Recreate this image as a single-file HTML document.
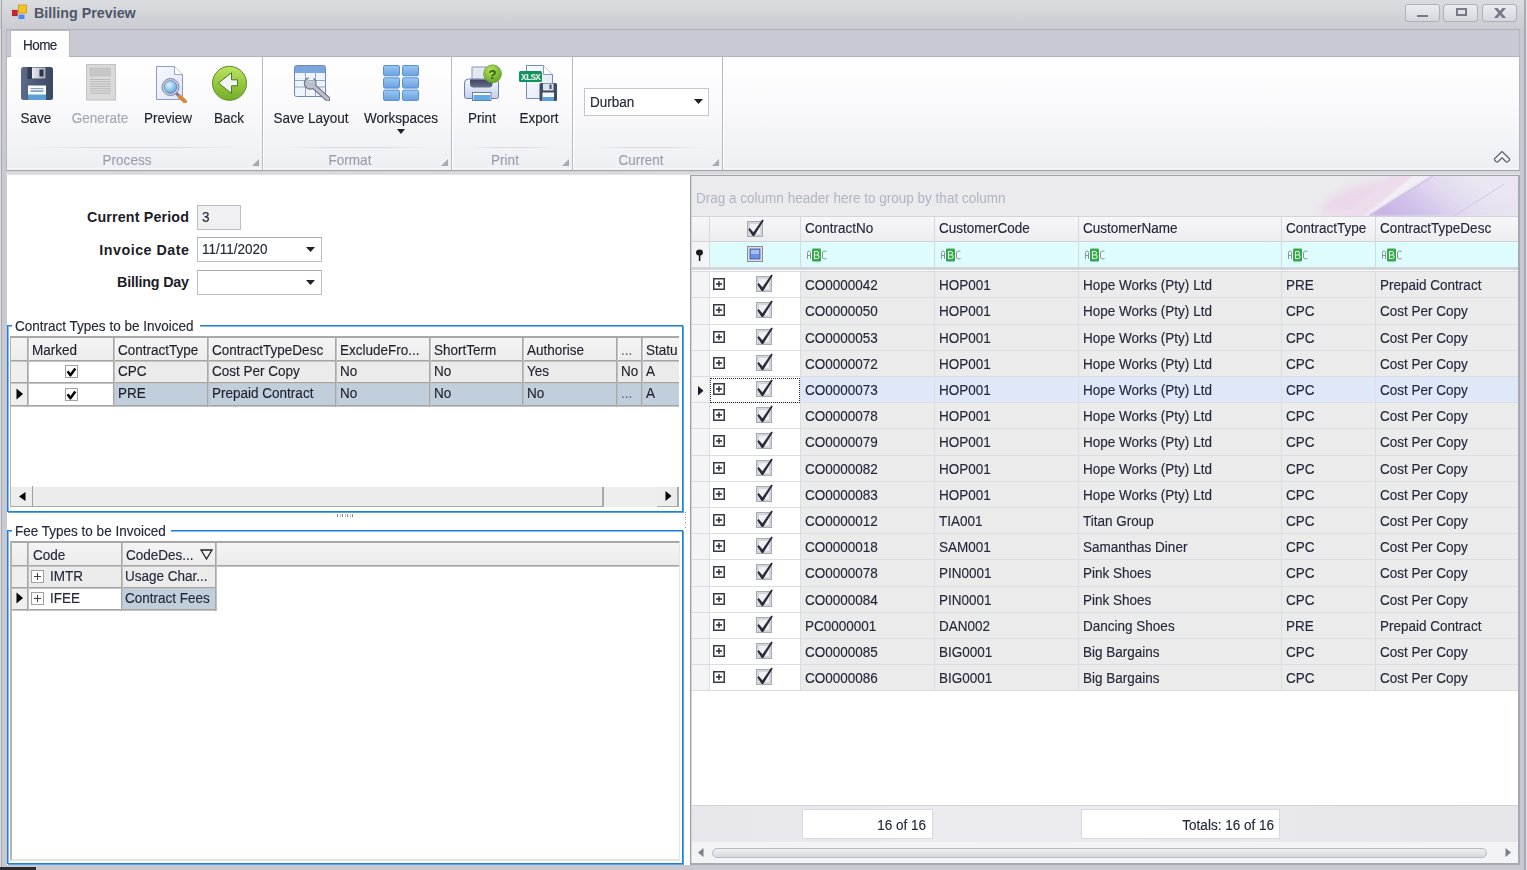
<!DOCTYPE html><html><head><meta charset="utf-8"><style>
*{box-sizing:border-box}
body{margin:0;width:1527px;height:870px;overflow:hidden;position:relative;background:#c9c9d2;font-family:"Liberation Sans", sans-serif;font-size:13.5px;color:#24283a}
.a{position:absolute}
.t{position:absolute;white-space:nowrap;line-height:1;font-size:14.7px;transform:scaleX(.92);transform-origin:0 0;margin-top:-0.5px;-webkit-text-stroke:0.15px currentColor}
.nb{transform:none;margin-top:0;-webkit-text-stroke:0}
</style></head><body>

<div class="a" style="left:0;top:0;width:1527px;height:29px;background:linear-gradient(#dbdce0,#cbccd1)"></div>
<svg class="a" style="left:11px;top:4px" width="17" height="17" viewBox="0 0 17 17">
<rect x="1.2" y="6" width="5" height="6" fill="#c8282a" stroke="#901010" stroke-width=".5"/><rect x="1" y="0.5" width="5.5" height="5" fill="none" stroke="#d4d6dc" stroke-width=".6"/><rect x="1" y="12.5" width="5.5" height="4" fill="none" stroke="#d4d6dc" stroke-width=".6"/>
<rect x="7.5" y="1" width="8" height="8" fill="#f2c420" stroke="#c49000" stroke-width=".7"/>
<rect x="7.5" y="10.5" width="6" height="4.5" fill="#4a8ae8"/>
</svg>
<div class="t nb" style="left:34px;top:6px;font-weight:bold;font-size:14.3px;color:#4e566a">Billing Preview</div>
<div class="a" style="left:1405px;top:4px;width:35px;height:18px;border:1px solid #adb0ba;border-radius:3px;background:linear-gradient(#ececf0,#d6d7dc)"></div>
<div class="a" style="left:1443px;top:4px;width:35px;height:18px;border:1px solid #adb0ba;border-radius:3px;background:linear-gradient(#ececf0,#d6d7dc)"></div>
<div class="a" style="left:1482px;top:4px;width:35px;height:18px;border:1px solid #adb0ba;border-radius:3px;background:linear-gradient(#ececf0,#d6d7dc)"></div>
<div class="a" style="left:1417px;top:15px;width:11px;height:2px;background:#777a86"></div>
<div class="a" style="left:1456px;top:8px;width:11px;height:8px;border:2px solid #777a86"></div>
<svg class="a" style="left:1493px;top:8px" width="14" height="10" viewBox="0 0 14 10"><path d="M1 0H4.6L7 3L9.4 0H13L8.8 5L13 10H9.4L7 7L4.6 10H1L5.2 5Z" fill="#777a86"/></svg>
<div class="a" style="left:0;top:29px;width:7px;height:841px;background:#c9c9d2"></div>
<div class="a" style="left:1px;top:0px;width:1px;height:870px;background:#a4a6b0"></div>
<div class="a" style="left:0;top:29px;width:1px;height:841px;background:#dcdde2"></div>
<div class="a" style="left:1524px;top:0;width:2px;height:870px;background:#a8aab4"></div>
<div class="a" style="left:1526px;top:0;width:1px;height:870px;background:#e4e5e8"></div>
<div class="a" style="left:0;top:867px;width:36px;height:3px;background:#2c2c2e"></div>
<div class="a" style="left:6px;top:29px;width:1514px;height:28px;background:#c9c9d3;border-top:1px solid #aeb0ba;border-left:1px solid #b4b6c0;border-right:1px solid #b4b6c0"></div>
<div class="a" style="left:6px;top:56px;width:1514px;height:1px;background:#b0b2bc"></div>
<div class="a" style="left:10px;top:30px;width:60px;height:28px;background:linear-gradient(#ffffff,#fbfbfc);border:1px solid #b8bac4;border-bottom:none"></div>
<div class="t" style="left:23px;top:38px;color:#24283a;letter-spacing:-0.6px">Home</div>
<div class="a" style="left:6px;top:57px;width:1514px;height:114px;background:linear-gradient(#ffffff 0%,#fafafc 40%,#eeeff3 100%);border-left:1px solid #b4b6c0;border-right:1px solid #b4b6c0;border-bottom:1px solid #a6a7ad"></div>
<div class="a" style="left:7px;top:168px;width:1512px;height:1px;background:#f6f7fa"></div>
<div class="a" style="left:6px;top:171px;width:1514px;height:4px;background:linear-gradient(#d0d0d5,#e4e4e8)"></div>
<div class="a" style="left:262px;top:57px;width:1px;height:113px;background:#b8bac2"></div>
<div class="a" style="left:263px;top:57px;width:1px;height:113px;background:#ffffff"></div>
<div class="a" style="left:451px;top:57px;width:1px;height:113px;background:#b8bac2"></div>
<div class="a" style="left:452px;top:57px;width:1px;height:113px;background:#ffffff"></div>
<div class="a" style="left:572px;top:57px;width:1px;height:113px;background:#b8bac2"></div>
<div class="a" style="left:573px;top:57px;width:1px;height:113px;background:#ffffff"></div>
<div class="a" style="left:722px;top:57px;width:1px;height:113px;background:#b8bac2"></div>
<div class="a" style="left:723px;top:57px;width:1px;height:113px;background:#ffffff"></div>
<div class="a" style="left:30px;top:147px;width:210px;height:1px;background:linear-gradient(90deg,rgba(210,210,218,0),#dcdce2 30%,#dcdce2 70%,rgba(210,210,218,0))"></div>
<div class="a" style="left:285px;top:147px;width:145px;height:1px;background:linear-gradient(90deg,rgba(210,210,218,0),#dcdce2 30%,#dcdce2 70%,rgba(210,210,218,0))"></div>
<div class="a" style="left:470px;top:147px;width:85px;height:1px;background:linear-gradient(90deg,rgba(210,210,218,0),#dcdce2 30%,#dcdce2 70%,rgba(210,210,218,0))"></div>
<div class="a" style="left:590px;top:147px;width:115px;height:1px;background:linear-gradient(90deg,rgba(210,210,218,0),#dcdce2 30%,#dcdce2 70%,rgba(210,210,218,0))"></div>
<div class="t" style="left:67px;width:120px;text-align:center;top:153px;color:#9a9eac;transform-origin:50% 0">Process</div>
<div class="t" style="left:290px;width:120px;text-align:center;top:153px;color:#9a9eac;transform-origin:50% 0">Format</div>
<div class="t" style="left:445px;width:120px;text-align:center;top:153px;color:#9a9eac;transform-origin:50% 0">Print</div>
<div class="t" style="left:581px;width:120px;text-align:center;top:153px;color:#9a9eac;transform-origin:50% 0">Current</div>
<svg class="a" style="left:252px;top:159px" width="7" height="7"><path d="M7 0L7 7L0 7Z" fill="#a8aab2"/></svg>
<svg class="a" style="left:441px;top:159px" width="7" height="7"><path d="M7 0L7 7L0 7Z" fill="#a8aab2"/></svg>
<svg class="a" style="left:562px;top:159px" width="7" height="7"><path d="M7 0L7 7L0 7Z" fill="#a8aab2"/></svg>
<svg class="a" style="left:712px;top:159px" width="7" height="7"><path d="M7 0L7 7L0 7Z" fill="#a8aab2"/></svg>
<div class="t" style="left:-24px;width:120px;text-align:center;top:111px;color:#1f1f2b;transform-origin:50% 0">Save</div>
<div class="t" style="left:40px;width:120px;text-align:center;top:111px;color:#a4a6b4;transform-origin:50% 0">Generate</div>
<div class="t" style="left:108px;width:120px;text-align:center;top:111px;color:#1f1f2b;transform-origin:50% 0">Preview</div>
<div class="t" style="left:169px;width:120px;text-align:center;top:111px;color:#1f1f2b;transform-origin:50% 0">Back</div>
<div class="t" style="left:251px;width:120px;text-align:center;top:111px;color:#1f1f2b;transform-origin:50% 0">Save Layout</div>
<div class="t" style="left:341px;width:120px;text-align:center;top:111px;color:#1f1f2b;transform-origin:50% 0">Workspaces</div>
<div class="t" style="left:422px;width:120px;text-align:center;top:111px;color:#1f1f2b;transform-origin:50% 0">Print</div>
<div class="t" style="left:479px;width:120px;text-align:center;top:111px;color:#1f1f2b;transform-origin:50% 0">Export</div>
<svg class="a" style="left:397px;top:129px" width="8" height="5"><path d="M0 0H8L4 5Z" fill="#1f1f2b"/></svg>
<svg class="a" style="left:20px;top:66px" width="34" height="35" viewBox="0 0 34 35">
<defs><linearGradient id="fl" x1="0" x2="1"><stop offset="0" stop-color="#5d6c8c"/><stop offset=".5" stop-color="#4a5874"/><stop offset="1" stop-color="#3c4862"/></linearGradient>
<linearGradient id="sh" x1="0" x2="1"><stop offset="0" stop-color="#e8ebf0"/><stop offset="1" stop-color="#a9b0bc"/></linearGradient></defs>
<rect x="1" y="1" width="32" height="33" rx="2.5" fill="url(#fl)"/>
<rect x="7.5" y="1" width="18.5" height="12" fill="#323c52"/>
<rect x="12" y="1.5" width="13.5" height="11" fill="url(#sh)"/>
<rect x="19.5" y="3.5" width="4" height="7" fill="#2c3448"/>
<rect x="8" y="19.5" width="18" height="14.5" fill="#fafbfd"/>
<rect x="8" y="28.5" width="18" height="5.5" fill="#5a9fd6"/>
<rect x="10.5" y="22" width="13" height="1.2" fill="#8aa4c8"/>
<rect x="10.5" y="24.5" width="13" height="1.2" fill="#4a78b0"/>
</svg>
<svg class="a" style="left:85px;top:63px" width="32" height="38" viewBox="0 0 32 38">
<rect x="1.5" y="1.5" width="29" height="35.5" fill="#dadada" stroke="#c2c2c2"/>
<rect x="5" y="5" width="20.5" height="8" fill="#c6c6c6" stroke="#bdbdbd" stroke-width=".6"/>
<g stroke="#bababa" stroke-width="1"><path d="M5 16.5H25.5M5 18.8H25.5M5 21.1H25.5M5 23.4H25.5M5 25.7H25.5M5 28H25.5M5 30.3H25.5"/></g>
</svg>
<svg class="a" style="left:155px;top:65px" width="34" height="38" viewBox="0 0 34 38">
<defs><linearGradient id="pg" x1="0" y1="0" x2="1" y2="1"><stop offset="0" stop-color="#f8faff"/><stop offset="1" stop-color="#dce4f4"/></linearGradient>
<radialGradient id="lens" cx=".4" cy=".35" r=".7"><stop offset="0" stop-color="#e4f2fc"/><stop offset=".6" stop-color="#8cc4ec"/><stop offset="1" stop-color="#5a98d0"/></radialGradient></defs>
<path d="M1.5 1.5H19.5L27.5 9.5V34.5H1.5Z" fill="url(#pg)" stroke="#8d99cf" stroke-width="1"/>
<path d="M19.5 1.5V9.5H27.5" fill="#ffffff" stroke="#9aa4d4" stroke-width="1"/>
<path d="M21 28L29 35.5" stroke="#6a7494" stroke-width="3"/>
<path d="M24.5 31.5L30 36.5" stroke="#d88a3c" stroke-width="4" stroke-linecap="round"/>
<circle cx="15.5" cy="22" r="8.5" fill="#c8d0e0" stroke="#7c88aa" stroke-width="1"/>
<circle cx="15.5" cy="22" r="6.3" fill="url(#lens)" stroke="#6a80a8" stroke-width=".8"/>
</svg>
<svg class="a" style="left:211px;top:65px" width="37" height="37" viewBox="0 0 37 37">
<defs><linearGradient id="gb" x1="0" y1="0" x2="0" y2="1"><stop offset="0" stop-color="#bce466"/><stop offset=".5" stop-color="#96c83e"/><stop offset="1" stop-color="#74ac2a"/></linearGradient></defs>
<circle cx="18.5" cy="18.3" r="17" fill="url(#gb)" stroke="#5c8e22" stroke-width="1"/>
<path d="M7.5 18L20.5 7.8V14.8H26.5V20.8H20.5V28.4Z" fill="#f2f4f6" stroke="#4a7a1a" stroke-width="1"/>
</svg>
<svg class="a" style="left:293px;top:64px" width="40" height="38" viewBox="0 0 40 38">
<rect x="1.5" y="1.5" width="31" height="31" rx="2" fill="#f0f4fb" stroke="#6a86c4" stroke-width="1"/>
<rect x="2" y="2" width="30" height="7" fill="#7aa6de"/>
<g stroke="#8aa4d4" stroke-width="1"><path d="M12.5 1.5V32.5M22.5 1.5V32.5M1.5 16.5H32.5M1.5 23H32.5"/></g>
<defs><mask id="wm"><rect x="0" y="0" width="40" height="38" fill="#fff"/><path d="M15.3 11V16.5Q17.5 19 20 16.5V11Z" fill="#000" transform="rotate(12 17.5 16)"/></mask></defs><g mask="url(#wm)"><circle cx="17.2" cy="19.3" r="6.4" fill="#6c7080"/><path d="M17.2 19.3L34.8 35" stroke="#6c7080" stroke-width="5.4" stroke-linecap="round"/><circle cx="17.2" cy="19.3" r="5.3" fill="#bcc0cc"/><path d="M17.2 19.3L34.8 35" stroke="#bcc0cc" stroke-width="3.2" stroke-linecap="round"/></g>
</svg>
<svg class="a" style="left:382px;top:64px" width="39" height="39" viewBox="0 0 39 39">
<defs><linearGradient id="wg" x1="0" y1="0" x2="0" y2="1"><stop offset="0" stop-color="#9cc8f2"/><stop offset="1" stop-color="#68a0e0"/></linearGradient></defs><rect x="1.5" y="1.5" width="16" height="10.3" rx="1.5" fill="url(#wg)" stroke="#5a8ed2" stroke-width="1"/><rect x="20.5" y="1.5" width="16" height="10.3" rx="1.5" fill="url(#wg)" stroke="#5a8ed2" stroke-width="1"/><rect x="1.5" y="13.8" width="16" height="10.3" rx="1.5" fill="url(#wg)" stroke="#5a8ed2" stroke-width="1"/><rect x="20.5" y="13.8" width="16" height="10.3" rx="1.5" fill="url(#wg)" stroke="#5a8ed2" stroke-width="1"/><rect x="1.5" y="26.1" width="16" height="10.3" rx="1.5" fill="url(#wg)" stroke="#5a8ed2" stroke-width="1"/><rect x="20.5" y="26.1" width="16" height="10.3" rx="1.5" fill="url(#wg)" stroke="#5a8ed2" stroke-width="1"/></svg>
<svg class="a" style="left:455px;top:58px" width="110" height="50" viewBox="0 0 110 50">
<defs><linearGradient id="pb" x1="0" y1="0" x2="0" y2="1"><stop offset="0" stop-color="#f4f7fc"/><stop offset="1" stop-color="#c4d0e8"/></linearGradient>
<linearGradient id="pd" x1="0" y1="0" x2="0" y2="1"><stop offset="0" stop-color="#3c465e"/><stop offset="1" stop-color="#68728e"/></linearGradient>
<radialGradient id="qg" cx=".4" cy=".3" r=".8"><stop offset="0" stop-color="#b4e060"/><stop offset="1" stop-color="#5a9e1e"/></radialGradient>
<linearGradient id="eg" x1="0" y1="0" x2="1" y2="1"><stop offset="0" stop-color="#fafcff"/><stop offset="1" stop-color="#dfe6f4"/></linearGradient></defs>
<rect x="17" y="9" width="14" height="14" fill="#e4e8f0" stroke="#8a98c4" stroke-width="1"/>
<path d="M9.5 25Q9.5 21 13.5 21H39.5Q43.5 21 43.5 25V38.5Q43.5 40.5 41.5 40.5H11.5Q9.5 40.5 9.5 38.5Z" fill="url(#pb)" stroke="#6c7cb6" stroke-width="1"/>
<path d="M15 21.5H37.5V26Q37.5 29.5 34 29.5H18.5Q15 29.5 15 26Z" fill="url(#pd)"/>
<rect x="17.5" y="34.5" width="18.5" height="8" fill="#ffffff" stroke="#6c7cb6" stroke-width="1"/>
<rect x="18.5" y="37" width="16.5" height="5" fill="#62ace4"/>
<circle cx="37.5" cy="15.8" r="9" fill="url(#qg)" stroke="#5a9428" stroke-width=".6"/>
<text x="37.5" y="20.5" text-anchor="middle" font-family="Liberation Sans" font-weight="bold" font-size="13" fill="#2e5c0c">?</text>
<path d="M71.5 7.5H88.5L97.5 16.5V40.5H71.5Z" fill="url(#eg)" stroke="#7a88c2" stroke-width="1"/>
<path d="M88.5 7.5V16.5H97.5" fill="#ffffff" stroke="#8a96c8" stroke-width="1"/>
<rect x="64" y="13" width="23" height="11" rx="1.5" fill="#14915e"/>
<text x="75.5" y="21.8" text-anchor="middle" font-family="Liberation Mono" font-weight="bold" font-size="9" fill="#e8f4ee" letter-spacing="-.6">XLSX</text>
<rect x="84.5" y="25" width="17.5" height="18" rx="1.5" fill="#3e4a66"/>
<rect x="88" y="25.5" width="10.5" height="7" fill="#dde2ea"/>
<rect x="94.5" y="26.5" width="2" height="4.5" fill="#3e4a66"/>
<rect x="87.5" y="34.5" width="11.5" height="8.5" fill="#f6f8fa"/>
<rect x="87.5" y="39" width="11.5" height="4" fill="#5aa0d8"/>
</svg>
<div class="a" style="left:584px;top:88px;width:125px;height:28px;background:#fff;border:1px solid #c4c6ce"></div>
<div class="t" style="left:590px;top:95px">Durban</div>
<svg class="a" style="left:694px;top:99px" width="9" height="5"><path d="M0 0H9L4.5 5Z" fill="#1f1f2b"/></svg>
<svg class="a" style="left:1490px;top:147px" width="24" height="18" viewBox="0 0 24 18"><path d="M12 4.5L19.5 11.8Q20 12.5 19.3 13.3L17.6 14.8Q16.8 15.4 16 14.7L12 10.8L8 14.7Q7.2 15.4 6.4 14.8L4.7 13.3Q4 12.5 4.5 11.8Z" fill="#f6f6f8" stroke="#5e626e" stroke-width="1.2" stroke-linejoin="round"/></svg>
<div class="a" style="left:7px;top:175px;width:1512px;height:690px;background:#ffffff"></div>
<div class="t nb" style="left:-11px;width:200.15px;text-align:right;top:210px;font-weight:bold;font-size:14.3px;color:#1c1c28;letter-spacing:0.15px">Current Period</div>
<div class="t nb" style="left:-11px;width:200.5px;text-align:right;top:243px;font-weight:bold;font-size:14.3px;color:#1c1c28;letter-spacing:0.5px">Invoice Date</div>
<div class="t nb" style="left:-11px;width:199.8px;text-align:right;top:275px;font-weight:bold;font-size:14.3px;color:#1c1c28;letter-spacing:-0.2px">Billing Day</div>
<div class="a" style="left:197px;top:205px;width:44px;height:25px;background:#f0f0f3;border:1px solid #bcbec6"></div>
<div class="t" style="left:202px;top:210px">3</div>
<div class="a" style="left:197px;top:237px;width:125px;height:25px;background:#fff;border:1px solid #bcbec6;border-top-color:#a8aab2"></div>
<svg class="a" style="left:306px;top:247px" width="9" height="5"><path d="M0 0H9L4.5 5Z" fill="#1f1f2b"/></svg>
<div class="a" style="left:197px;top:270px;width:125px;height:25px;background:#fff;border:1px solid #bcbec6;border-top-color:#a8aab2"></div>
<svg class="a" style="left:306px;top:280px" width="9" height="5"><path d="M0 0H9L4.5 5Z" fill="#1f1f2b"/></svg>
<div class="t" style="left:202px;top:242px">11/11/2020</div>
<div class="a" style="left:7px;top:325px;width:676px;height:187px;border:1px solid #1a80dc;box-shadow:inset 1px 1px 0 rgba(31,134,221,.55),1px 1px 0 rgba(31,134,221,.75)"></div>
<div class="a" style="left:12px;top:321px;width:188px;height:8px;background:#fff"></div>
<div class="t" style="left:15px;top:319.5px;color:#24283a">Contract Types to be Invoiced</div>
<div class="a" style="left:7px;top:530px;width:676px;height:334px;border:1px solid #1a80dc;box-shadow:inset 1px 1px 0 rgba(31,134,221,.55),1px 1px 0 rgba(31,134,221,.75)"></div>
<div class="a" style="left:12px;top:526px;width:159px;height:8px;background:#fff"></div>
<div class="t" style="left:15px;top:524.5px;color:#24283a">Fee Types to be Invoiced</div>
<div class="a" style="left:10px;top:336px;width:669px;height:171px;background:#fff;border-left:1px solid #b4b4b4;border-top:2px solid #a8a8a8;overflow:hidden"></div>
<div class="a" style="left:11px;top:338px;width:668px;height:22px;background:linear-gradient(#f4f4f4,#ececec)"></div>
<div class="a" style="left:11px;top:360px;width:16px;height:22px;background:#efefef"></div>
<div class="a" style="left:27px;top:360px;width:86px;height:22px;background:#ffffff"></div>
<div class="a" style="left:113px;top:360px;width:566px;height:22px;background:#ebebeb"></div>
<div class="a" style="left:11px;top:383px;width:16px;height:22px;background:#efefef"></div>
<div class="a" style="left:27px;top:383px;width:86px;height:22px;background:#ffffff"></div>
<div class="a" style="left:113px;top:383px;width:566px;height:22px;background:#c1cfdd"></div>
<div class="a" style="left:11px;top:360px;width:668px;height:2px;background:linear-gradient(#a4a4a4 50%,#c4c4c4 50%)"></div>
<div class="a" style="left:11px;top:382px;width:668px;height:2px;background:linear-gradient(#a4a4a4 50%,#c4c4c4 50%)"></div>
<div class="a" style="left:11px;top:405px;width:668px;height:2px;background:linear-gradient(#a4a4a4 50%,#c4c4c4 50%)"></div>
<div class="a" style="left:27px;top:338px;width:2px;height:69px;background:linear-gradient(90deg,#a8a8a8 50%,#c0c0c0 50%)"></div>
<div class="a" style="left:29px;top:340px;width:1px;height:20px;background:#fafafa"></div>
<div class="a" style="left:113px;top:338px;width:2px;height:69px;background:linear-gradient(90deg,#a8a8a8 50%,#c0c0c0 50%)"></div>
<div class="a" style="left:115px;top:340px;width:1px;height:20px;background:#fafafa"></div>
<div class="a" style="left:207px;top:338px;width:2px;height:69px;background:linear-gradient(90deg,#a8a8a8 50%,#c0c0c0 50%)"></div>
<div class="a" style="left:209px;top:340px;width:1px;height:20px;background:#fafafa"></div>
<div class="a" style="left:335px;top:338px;width:2px;height:69px;background:linear-gradient(90deg,#a8a8a8 50%,#c0c0c0 50%)"></div>
<div class="a" style="left:337px;top:340px;width:1px;height:20px;background:#fafafa"></div>
<div class="a" style="left:429px;top:338px;width:2px;height:69px;background:linear-gradient(90deg,#a8a8a8 50%,#c0c0c0 50%)"></div>
<div class="a" style="left:431px;top:340px;width:1px;height:20px;background:#fafafa"></div>
<div class="a" style="left:522px;top:338px;width:2px;height:69px;background:linear-gradient(90deg,#a8a8a8 50%,#c0c0c0 50%)"></div>
<div class="a" style="left:524px;top:340px;width:1px;height:20px;background:#fafafa"></div>
<div class="a" style="left:616px;top:338px;width:2px;height:69px;background:linear-gradient(90deg,#a8a8a8 50%,#c0c0c0 50%)"></div>
<div class="a" style="left:618px;top:340px;width:1px;height:20px;background:#fafafa"></div>
<div class="a" style="left:641px;top:338px;width:2px;height:69px;background:linear-gradient(90deg,#a8a8a8 50%,#c0c0c0 50%)"></div>
<div class="a" style="left:643px;top:340px;width:1px;height:20px;background:#fafafa"></div>
<div class="t" style="left:32px;top:343px;color:#1f1f2b">Marked</div>
<div class="t" style="left:118px;top:343px;color:#1f1f2b">ContractType</div>
<div class="t" style="left:212px;top:343px;color:#1f1f2b">ContractTypeDesc</div>
<div class="t" style="left:340px;top:343px;color:#1f1f2b">ExcludeFro...</div>
<div class="t" style="left:434px;top:343px;color:#1f1f2b">ShortTerm</div>
<div class="t" style="left:527px;top:343px;color:#1f1f2b">Authorise</div>
<div class="t" style="left:621px;top:343px;color:#6a6a7a">...</div>
<div class="t" style="left:646px;top:343px;color:#1f1f2b">Statu</div>
<div class="t" style="left:118px;top:364.2px;color:#1f1f2b">CPC</div>
<div class="t" style="left:212px;top:364.2px;color:#1f1f2b">Cost Per Copy</div>
<div class="t" style="left:340px;top:364.2px;color:#1f1f2b">No</div>
<div class="t" style="left:434px;top:364.2px;color:#1f1f2b">No</div>
<div class="t" style="left:527px;top:364.2px;color:#1f1f2b">Yes</div>
<div class="t" style="left:621px;top:364.2px;color:#1f1f2b">No</div>
<div class="t" style="left:646px;top:364.2px;color:#1f1f2b">A</div>
<div class="a" style="left:65px;top:365px;width:13px;height:13px;border:1px solid #a0a0a0;background:#fff"></div>
<svg class="a" style="left:65px;top:365px" width="13" height="13" viewBox="0 0 13 13"><path d="M2.6 6.2L5.4 10.3L10.3 3.6" fill="none" stroke="#000" stroke-width="2.5" stroke-linejoin="round"/></svg>
<div class="t" style="left:118px;top:386.5px;color:#1f1f2b">PRE</div>
<div class="t" style="left:212px;top:386.5px;color:#1f1f2b">Prepaid Contract</div>
<div class="t" style="left:340px;top:386.5px;color:#1f1f2b">No</div>
<div class="t" style="left:434px;top:386.5px;color:#1f1f2b">No</div>
<div class="t" style="left:527px;top:386.5px;color:#1f1f2b">No</div>
<div class="t" style="left:621px;top:386.5px;color:#6a6a7a">...</div>
<div class="t" style="left:646px;top:386.5px;color:#1f1f2b">A</div>
<div class="a" style="left:65px;top:388px;width:13px;height:13px;border:1px solid #a0a0a0;background:#fff"></div>
<svg class="a" style="left:65px;top:388px" width="13" height="13" viewBox="0 0 13 13"><path d="M2.6 6.2L5.4 10.3L10.3 3.6" fill="none" stroke="#000" stroke-width="2.5" stroke-linejoin="round"/></svg>
<svg class="a" style="left:16px;top:388px" width="8" height="12"><path d="M0.5 0.5L7 6L0.5 11.5Z" fill="#000"/></svg>
<div class="a" style="left:11px;top:487px;width:22px;height:20px;background:#ededed"></div>
<div class="a" style="left:11px;top:506px;width:22px;height:1px;background:#a8a8a8"></div>
<div class="a" style="left:32px;top:486px;width:1px;height:21px;background:#a0a0a0"></div>
<svg class="a" style="left:19px;top:492px" width="7" height="9"><path d="M6.5 0L0 4.5L6.5 9Z" fill="#000"/></svg>
<div class="a" style="left:33px;top:487px;width:571px;height:20px;background:#ececec;border-right:2px solid #a8a8a8;border-bottom:1px solid #a8a8a8"></div>
<div class="a" style="left:604px;top:487px;width:53px;height:20px;background:repeating-conic-gradient(#f4f4f4 0 25%,#e8e8e8 0 50%) 0 0/2px 2px"></div>
<div class="a" style="left:657px;top:487px;width:22px;height:20px;background:#ececec;border-right:2px solid #a8a8a8;border-bottom:1px solid #a8a8a8"></div>
<svg class="a" style="left:665px;top:491px" width="7" height="10"><path d="M0.5 0L6.5 5L0.5 10Z" fill="#000"/></svg>
<div class="a" style="left:337.0px;top:514px;width:1.2px;height:2.5px;background:#7c8090;border-radius:.6px"></div><div class="a" style="left:685px;top:511.5px;width:3px;height:1.2px;background:#7c8090;border-radius:.6px"></div><div class="a" style="left:339.5px;top:514px;width:1.2px;height:2.5px;background:#b4b8c4;border-radius:.6px"></div><div class="a" style="left:685px;top:514.0px;width:3px;height:1.2px;background:#b4b8c4;border-radius:.6px"></div><div class="a" style="left:342.0px;top:514px;width:1.2px;height:2.5px;background:#7c8090;border-radius:.6px"></div><div class="a" style="left:685px;top:516.5px;width:3px;height:1.2px;background:#7c8090;border-radius:.6px"></div><div class="a" style="left:344.5px;top:514px;width:1.2px;height:2.5px;background:#b4b8c4;border-radius:.6px"></div><div class="a" style="left:685px;top:519.0px;width:3px;height:1.2px;background:#b4b8c4;border-radius:.6px"></div><div class="a" style="left:347.0px;top:514px;width:1.2px;height:2.5px;background:#7c8090;border-radius:.6px"></div><div class="a" style="left:685px;top:521.5px;width:3px;height:1.2px;background:#7c8090;border-radius:.6px"></div><div class="a" style="left:349.5px;top:514px;width:1.2px;height:2.5px;background:#b4b8c4;border-radius:.6px"></div><div class="a" style="left:685px;top:524.0px;width:3px;height:1.2px;background:#b4b8c4;border-radius:.6px"></div><div class="a" style="left:352.0px;top:514px;width:1.2px;height:2.5px;background:#7c8090;border-radius:.6px"></div><div class="a" style="left:685px;top:526.5px;width:3px;height:1.2px;background:#7c8090;border-radius:.6px"></div>
<div class="a" style="left:10px;top:541px;width:670px;height:320px;background:#fff;border-left:2px solid #b4b4b4;border-top:2px solid #a8a8a8;border-right:1px solid #e6e6e6;border-bottom:2px solid #e4e4e4"></div>
<div class="a" style="left:12px;top:543px;width:667px;height:22px;background:linear-gradient(#f4f4f4,#ececec)"></div>
<div class="a" style="left:12px;top:566px;width:15px;height:21px;background:#efefef"></div>
<div class="a" style="left:27px;top:566px;width:94px;height:21px;background:#ebebeb"></div>
<div class="a" style="left:121px;top:566px;width:95px;height:21px;background:#ebebeb"></div>
<div class="a" style="left:12px;top:588px;width:15px;height:21px;background:#efefef"></div>
<div class="a" style="left:27px;top:588px;width:94px;height:21px;background:#ffffff"></div>
<div class="a" style="left:121px;top:588px;width:95px;height:21px;background:#c1cfdd"></div>
<div class="a" style="left:11px;top:565px;width:668px;height:2px;background:linear-gradient(#a4a4a4 50%,#c4c4c4 50%)"></div>
<div class="a" style="left:11px;top:587px;width:205px;height:2px;background:linear-gradient(#a4a4a4 50%,#c4c4c4 50%)"></div>
<div class="a" style="left:11px;top:609px;width:205px;height:2px;background:linear-gradient(#a4a4a4 50%,#c4c4c4 50%)"></div>
<div class="a" style="left:27px;top:543px;width:2px;height:68px;background:linear-gradient(90deg,#a8a8a8 50%,#c0c0c0 50%)"></div>
<div class="a" style="left:121px;top:543px;width:2px;height:68px;background:linear-gradient(90deg,#a8a8a8 50%,#c0c0c0 50%)"></div>
<div class="a" style="left:215px;top:543px;width:2px;height:68px;background:linear-gradient(90deg,#a8a8a8 50%,#c0c0c0 50%)"></div>
<div class="t" style="left:33px;top:548px">Code</div>
<div class="t" style="left:126px;top:548px">CodeDes...</div>
<svg class="a" style="left:200px;top:549px" width="13" height="11" viewBox="0 0 13 11"><path d="M1 1H12L6.5 10Z" fill="none" stroke="#1f1f2b" stroke-width="1.3"/></svg>
<div class="a" style="left:31px;top:570px;width:13px;height:13px;border:1px solid #a0a0a0;background:#fff"></div>
<svg class="a" style="left:31px;top:570px" width="13" height="13"><path d="M3 6.5H10M6.5 3V10" stroke="#404040" stroke-width="1"/></svg>
<div class="t" style="left:50px;top:569px">IMTR</div>
<div class="t" style="left:125px;top:569px">Usage Char...</div>
<div class="a" style="left:31px;top:592px;width:13px;height:13px;border:1px solid #a0a0a0;background:#fff"></div>
<svg class="a" style="left:31px;top:592px" width="13" height="13"><path d="M3 6.5H10M6.5 3V10" stroke="#404040" stroke-width="1"/></svg>
<div class="t" style="left:50px;top:591px">IFEE</div>
<div class="t" style="left:125px;top:591px">Contract Fees</div>
<svg class="a" style="left:16px;top:592px" width="8" height="12"><path d="M0.5 0.5L7 6L0.5 11.5Z" fill="#000"/></svg>
<div class="a" style="left:686px;top:175px;width:4px;height:690px;background:#ffffff"></div>
<div class="a" style="left:690px;top:175px;width:830px;height:690px;background:#fff;border-left:1px solid #9c9ea8;box-shadow:inset 1px 0 0 #d4d5da;border-top:1px solid #a4a5ab;border-right:2px solid #a6a8b2;border-bottom:2px solid #a6a8b2"></div>
<div class="a" style="left:692px;top:176px;width:826px;height:40px;background:#ebebee;overflow:hidden"><svg width="826" height="40" style="position:absolute;left:0;top:0" viewBox="0 0 826 40"><defs><filter id="bl" x="-50%" y="-50%" width="200%" height="200%"><feGaussianBlur stdDeviation="5"/></filter><filter id="bl2"><feGaussianBlur stdDeviation="0.8"/></filter><linearGradient id="sw" gradientUnits="userSpaceOnUse" x1="700" y1="50" x2="760" y2="-20"><stop offset="0" stop-color="#c6b2e4"/><stop offset=".3" stop-color="#d0c0ea"/><stop offset=".65" stop-color="#e2daf0"/><stop offset="1" stop-color="#ebe7f2"/></linearGradient></defs><path d="M625 38Q640 10 700 4L730 4L680 38Z" fill="#ecd6ea" filter="url(#bl)"/><path d="M670 40L740 -2L700 -2L650 40Z" fill="#ecdcec" filter="url(#bl2)"/><path d="M672 40L684 40L742 -1L722 -1Z" fill="#f1eff4" filter="url(#bl2)"/><path d="M676 40L740 -1L830 -1L830 40Z" fill="url(#sw)" filter="url(#bl2)"/><path d="M790 40L830 14V40Z" fill="#e6e0f0" opacity=".6" filter="url(#bl)"/><path d="M677 40L741 0" stroke="#c4b0e4" stroke-width="1" opacity=".8"/><path d="M762 40L812 8" stroke="#cbbce8" stroke-width="1" opacity=".7"/></svg></div>
<div class="t" style="left:696px;top:191px;color:#b0b4c0;-webkit-text-stroke:0">Drag a column header here to group by that column</div>
<div class="a" style="left:692px;top:216px;width:826px;height:25px;background:linear-gradient(#f7f7f9,#ededf0);border-top:1px solid #d2d4da"></div>
<div class="a" style="left:692px;top:241px;width:826px;height:1px;background:#d2d4da"></div>
<div class="a" style="left:710px;top:242px;width:808px;height:25px;background:#dffcfc"></div>
<div class="a" style="left:692px;top:242px;width:18px;height:25px;background:#f4f4f6"></div>
<div class="a" style="left:692px;top:267px;width:826px;height:3px;background:#d4d5da"></div>
<div class="a" style="left:692px;top:270px;width:826px;height:1px;background:#ffffff"></div>
<div class="a" style="left:692px;top:271px;width:826px;height:1px;background:#d8d9de"></div>
<div class="a" style="left:709px;top:217px;width:1px;height:50px;background:#d6d8de"></div>
<div class="a" style="left:800px;top:217px;width:1px;height:50px;background:#d6d8de"></div>
<div class="a" style="left:934px;top:217px;width:1px;height:50px;background:#d6d8de"></div>
<div class="a" style="left:1078px;top:217px;width:1px;height:50px;background:#d6d8de"></div>
<div class="a" style="left:1281px;top:217px;width:1px;height:50px;background:#d6d8de"></div>
<div class="a" style="left:1375px;top:217px;width:1px;height:50px;background:#d6d8de"></div>
<div class="t" style="left:805px;top:221.7px">ContractNo</div>
<svg class="a" style="left:807px;top:248px" width="21" height="14" viewBox="0 0 21 14"><path d="M0.5 11V4.5Q0.5 3 2 3Q3.5 3 3.5 4.5V11M0.5 7.5H3.5" fill="none" stroke="#8e929c" stroke-width="1"/><rect x="5" y="0.5" width="9" height="13" rx="1.2" fill="#39a84a"/><path d="M7.5 3.5V10.5H10.5Q12 10.5 12 9V8Q12 7 10.5 7H7.5M7.5 3.5H10Q11.5 3.5 11.5 4.8Q11.5 7 10 7" fill="none" stroke="#e6f6e8" stroke-width="1"/><path d="M19.5 4Q19.5 3 17.5 3Q15.5 3 15.5 5V9Q15.5 11 17.5 11Q19.5 11 19.5 10" fill="none" stroke="#8e929c" stroke-width="1"/></svg>
<div class="t" style="left:939px;top:221.7px">CustomerCode</div>
<svg class="a" style="left:941px;top:248px" width="21" height="14" viewBox="0 0 21 14"><path d="M0.5 11V4.5Q0.5 3 2 3Q3.5 3 3.5 4.5V11M0.5 7.5H3.5" fill="none" stroke="#8e929c" stroke-width="1"/><rect x="5" y="0.5" width="9" height="13" rx="1.2" fill="#39a84a"/><path d="M7.5 3.5V10.5H10.5Q12 10.5 12 9V8Q12 7 10.5 7H7.5M7.5 3.5H10Q11.5 3.5 11.5 4.8Q11.5 7 10 7" fill="none" stroke="#e6f6e8" stroke-width="1"/><path d="M19.5 4Q19.5 3 17.5 3Q15.5 3 15.5 5V9Q15.5 11 17.5 11Q19.5 11 19.5 10" fill="none" stroke="#8e929c" stroke-width="1"/></svg>
<div class="t" style="left:1083px;top:221.7px">CustomerName</div>
<svg class="a" style="left:1085px;top:248px" width="21" height="14" viewBox="0 0 21 14"><path d="M0.5 11V4.5Q0.5 3 2 3Q3.5 3 3.5 4.5V11M0.5 7.5H3.5" fill="none" stroke="#8e929c" stroke-width="1"/><rect x="5" y="0.5" width="9" height="13" rx="1.2" fill="#39a84a"/><path d="M7.5 3.5V10.5H10.5Q12 10.5 12 9V8Q12 7 10.5 7H7.5M7.5 3.5H10Q11.5 3.5 11.5 4.8Q11.5 7 10 7" fill="none" stroke="#e6f6e8" stroke-width="1"/><path d="M19.5 4Q19.5 3 17.5 3Q15.5 3 15.5 5V9Q15.5 11 17.5 11Q19.5 11 19.5 10" fill="none" stroke="#8e929c" stroke-width="1"/></svg>
<div class="t" style="left:1286px;top:221.7px">ContractType</div>
<svg class="a" style="left:1288px;top:248px" width="21" height="14" viewBox="0 0 21 14"><path d="M0.5 11V4.5Q0.5 3 2 3Q3.5 3 3.5 4.5V11M0.5 7.5H3.5" fill="none" stroke="#8e929c" stroke-width="1"/><rect x="5" y="0.5" width="9" height="13" rx="1.2" fill="#39a84a"/><path d="M7.5 3.5V10.5H10.5Q12 10.5 12 9V8Q12 7 10.5 7H7.5M7.5 3.5H10Q11.5 3.5 11.5 4.8Q11.5 7 10 7" fill="none" stroke="#e6f6e8" stroke-width="1"/><path d="M19.5 4Q19.5 3 17.5 3Q15.5 3 15.5 5V9Q15.5 11 17.5 11Q19.5 11 19.5 10" fill="none" stroke="#8e929c" stroke-width="1"/></svg>
<div class="t" style="left:1380px;top:221.7px">ContractTypeDesc</div>
<svg class="a" style="left:1382px;top:248px" width="21" height="14" viewBox="0 0 21 14"><path d="M0.5 11V4.5Q0.5 3 2 3Q3.5 3 3.5 4.5V11M0.5 7.5H3.5" fill="none" stroke="#8e929c" stroke-width="1"/><rect x="5" y="0.5" width="9" height="13" rx="1.2" fill="#39a84a"/><path d="M7.5 3.5V10.5H10.5Q12 10.5 12 9V8Q12 7 10.5 7H7.5M7.5 3.5H10Q11.5 3.5 11.5 4.8Q11.5 7 10 7" fill="none" stroke="#e6f6e8" stroke-width="1"/><path d="M19.5 4Q19.5 3 17.5 3Q15.5 3 15.5 5V9Q15.5 11 17.5 11Q19.5 11 19.5 10" fill="none" stroke="#8e929c" stroke-width="1"/></svg>
<svg class="a" style="left:747px;top:218px" width="20" height="20" viewBox="0 0 20 20"><rect x="0.5" y="3.5" width="15" height="15" fill="#d4d6dc" stroke="#a8aab4"/><rect x="3" y="6" width="10" height="10" fill="#f0f0f4"/><path d="M1.3 11.4L2.7 10.1L6.4 14.3L15.3 1.4L16.8 2.5L7.2 17.9H5.7Z" fill="#2a2c3a"/></svg>
<svg class="a" style="left:747px;top:246px" width="16" height="16" viewBox="0 0 16 16"><rect x="0.5" y="0.5" width="15" height="15" fill="#dcdee4" stroke="#8a8c98"/><rect x="3" y="3" width="10" height="10" fill="#6a90e0" stroke="#3a5aa8" stroke-width=".8"/><rect x="4" y="4" width="8" height="4" fill="#a8c0f0"/></svg>
<svg class="a" style="left:695px;top:249px" width="9" height="12" viewBox="0 0 9 12"><ellipse cx="4.5" cy="3.5" rx="3.5" ry="3" fill="#1a1a22"/><rect x="3.8" y="5" width="1.6" height="7" fill="#1a1a22"/></svg>
<div class="a" style="left:692px;top:272px;width:18px;height:26px;background:#f4f4f6"></div>
<div class="a" style="left:710px;top:272px;width:90px;height:26px;background:#ffffff"></div>
<div class="a" style="left:801px;top:272px;width:717px;height:26px;background:#ebebec"></div>
<div class="a" style="left:692px;top:297px;width:826px;height:1px;background:#dcdde2"></div>
<div class="a" style="left:709px;top:272px;width:1px;height:26px;background:#dcdde2"></div>
<div class="a" style="left:800px;top:272px;width:1px;height:26px;background:#dcdde2"></div>
<div class="a" style="left:934px;top:272px;width:1px;height:26px;background:#dcdde2"></div>
<div class="a" style="left:1078px;top:272px;width:1px;height:26px;background:#dcdde2"></div>
<div class="a" style="left:1281px;top:272px;width:1px;height:26px;background:#dcdde2"></div>
<div class="a" style="left:1375px;top:272px;width:1px;height:26px;background:#dcdde2"></div>
<svg class="a" style="left:713px;top:278px" width="12" height="12" viewBox="0 0 12 12"><rect x="0.75" y="0.75" width="10.5" height="10.5" fill="#fff" stroke="#3a3a48" stroke-width="1.5"/><path d="M3 6H9M6 3V9" stroke="#2a2a38" stroke-width="1.4"/></svg>
<svg class="a" style="left:756px;top:273px" width="20" height="20" viewBox="0 0 20 20"><rect x="0.5" y="3.5" width="15" height="15" fill="#d4d6dc" stroke="#a8aab4"/><rect x="3" y="6" width="10" height="10" fill="#f0f0f4"/><path d="M1.3 11.4L2.7 10.1L6.4 14.3L15.3 1.4L16.8 2.5L7.2 17.9H5.7Z" fill="#2a2c3a"/></svg>
<div class="t" style="left:805px;top:278px">CO0000042</div>
<div class="t" style="left:939px;top:278px">HOP001</div>
<div class="t" style="left:1083px;top:278px">Hope Works (Pty) Ltd</div>
<div class="t" style="left:1286px;top:278px">PRE</div>
<div class="t" style="left:1380px;top:278px">Prepaid Contract</div>
<div class="a" style="left:692px;top:298px;width:18px;height:27px;background:#f4f4f6"></div>
<div class="a" style="left:710px;top:298px;width:90px;height:27px;background:#ffffff"></div>
<div class="a" style="left:801px;top:298px;width:717px;height:27px;background:#ebebec"></div>
<div class="a" style="left:692px;top:324px;width:826px;height:1px;background:#dcdde2"></div>
<div class="a" style="left:709px;top:298px;width:1px;height:27px;background:#dcdde2"></div>
<div class="a" style="left:800px;top:298px;width:1px;height:27px;background:#dcdde2"></div>
<div class="a" style="left:934px;top:298px;width:1px;height:27px;background:#dcdde2"></div>
<div class="a" style="left:1078px;top:298px;width:1px;height:27px;background:#dcdde2"></div>
<div class="a" style="left:1281px;top:298px;width:1px;height:27px;background:#dcdde2"></div>
<div class="a" style="left:1375px;top:298px;width:1px;height:27px;background:#dcdde2"></div>
<svg class="a" style="left:713px;top:304px" width="12" height="12" viewBox="0 0 12 12"><rect x="0.75" y="0.75" width="10.5" height="10.5" fill="#fff" stroke="#3a3a48" stroke-width="1.5"/><path d="M3 6H9M6 3V9" stroke="#2a2a38" stroke-width="1.4"/></svg>
<svg class="a" style="left:756px;top:299px" width="20" height="20" viewBox="0 0 20 20"><rect x="0.5" y="3.5" width="15" height="15" fill="#d4d6dc" stroke="#a8aab4"/><rect x="3" y="6" width="10" height="10" fill="#f0f0f4"/><path d="M1.3 11.4L2.7 10.1L6.4 14.3L15.3 1.4L16.8 2.5L7.2 17.9H5.7Z" fill="#2a2c3a"/></svg>
<div class="t" style="left:805px;top:304px">CO0000050</div>
<div class="t" style="left:939px;top:304px">HOP001</div>
<div class="t" style="left:1083px;top:304px">Hope Works (Pty) Ltd</div>
<div class="t" style="left:1286px;top:304px">CPC</div>
<div class="t" style="left:1380px;top:304px">Cost Per Copy</div>
<div class="a" style="left:692px;top:325px;width:18px;height:26px;background:#f4f4f6"></div>
<div class="a" style="left:710px;top:325px;width:90px;height:26px;background:#ffffff"></div>
<div class="a" style="left:801px;top:325px;width:717px;height:26px;background:#ebebec"></div>
<div class="a" style="left:692px;top:350px;width:826px;height:1px;background:#dcdde2"></div>
<div class="a" style="left:709px;top:325px;width:1px;height:26px;background:#dcdde2"></div>
<div class="a" style="left:800px;top:325px;width:1px;height:26px;background:#dcdde2"></div>
<div class="a" style="left:934px;top:325px;width:1px;height:26px;background:#dcdde2"></div>
<div class="a" style="left:1078px;top:325px;width:1px;height:26px;background:#dcdde2"></div>
<div class="a" style="left:1281px;top:325px;width:1px;height:26px;background:#dcdde2"></div>
<div class="a" style="left:1375px;top:325px;width:1px;height:26px;background:#dcdde2"></div>
<svg class="a" style="left:713px;top:331px" width="12" height="12" viewBox="0 0 12 12"><rect x="0.75" y="0.75" width="10.5" height="10.5" fill="#fff" stroke="#3a3a48" stroke-width="1.5"/><path d="M3 6H9M6 3V9" stroke="#2a2a38" stroke-width="1.4"/></svg>
<svg class="a" style="left:756px;top:326px" width="20" height="20" viewBox="0 0 20 20"><rect x="0.5" y="3.5" width="15" height="15" fill="#d4d6dc" stroke="#a8aab4"/><rect x="3" y="6" width="10" height="10" fill="#f0f0f4"/><path d="M1.3 11.4L2.7 10.1L6.4 14.3L15.3 1.4L16.8 2.5L7.2 17.9H5.7Z" fill="#2a2c3a"/></svg>
<div class="t" style="left:805px;top:331px">CO0000053</div>
<div class="t" style="left:939px;top:331px">HOP001</div>
<div class="t" style="left:1083px;top:331px">Hope Works (Pty) Ltd</div>
<div class="t" style="left:1286px;top:331px">CPC</div>
<div class="t" style="left:1380px;top:331px">Cost Per Copy</div>
<div class="a" style="left:692px;top:351px;width:18px;height:26px;background:#f4f4f6"></div>
<div class="a" style="left:710px;top:351px;width:90px;height:26px;background:#ffffff"></div>
<div class="a" style="left:801px;top:351px;width:717px;height:26px;background:#ebebec"></div>
<div class="a" style="left:692px;top:376px;width:826px;height:1px;background:#dcdde2"></div>
<div class="a" style="left:709px;top:351px;width:1px;height:26px;background:#dcdde2"></div>
<div class="a" style="left:800px;top:351px;width:1px;height:26px;background:#dcdde2"></div>
<div class="a" style="left:934px;top:351px;width:1px;height:26px;background:#dcdde2"></div>
<div class="a" style="left:1078px;top:351px;width:1px;height:26px;background:#dcdde2"></div>
<div class="a" style="left:1281px;top:351px;width:1px;height:26px;background:#dcdde2"></div>
<div class="a" style="left:1375px;top:351px;width:1px;height:26px;background:#dcdde2"></div>
<svg class="a" style="left:713px;top:357px" width="12" height="12" viewBox="0 0 12 12"><rect x="0.75" y="0.75" width="10.5" height="10.5" fill="#fff" stroke="#3a3a48" stroke-width="1.5"/><path d="M3 6H9M6 3V9" stroke="#2a2a38" stroke-width="1.4"/></svg>
<svg class="a" style="left:756px;top:352px" width="20" height="20" viewBox="0 0 20 20"><rect x="0.5" y="3.5" width="15" height="15" fill="#d4d6dc" stroke="#a8aab4"/><rect x="3" y="6" width="10" height="10" fill="#f0f0f4"/><path d="M1.3 11.4L2.7 10.1L6.4 14.3L15.3 1.4L16.8 2.5L7.2 17.9H5.7Z" fill="#2a2c3a"/></svg>
<div class="t" style="left:805px;top:357px">CO0000072</div>
<div class="t" style="left:939px;top:357px">HOP001</div>
<div class="t" style="left:1083px;top:357px">Hope Works (Pty) Ltd</div>
<div class="t" style="left:1286px;top:357px">CPC</div>
<div class="t" style="left:1380px;top:357px">Cost Per Copy</div>
<div class="a" style="left:692px;top:377px;width:18px;height:26px;background:#f4f4f6"></div>
<div class="a" style="left:710px;top:377px;width:90px;height:26px;background:#ffffff"></div>
<div class="a" style="left:801px;top:377px;width:717px;height:26px;background:#dfe8f9"></div>
<div class="a" style="left:692px;top:402px;width:826px;height:1px;background:#dcdde2"></div>
<div class="a" style="left:709px;top:377px;width:1px;height:26px;background:#dcdde2"></div>
<div class="a" style="left:800px;top:377px;width:1px;height:26px;background:#dcdde2"></div>
<div class="a" style="left:934px;top:377px;width:1px;height:26px;background:#dcdde2"></div>
<div class="a" style="left:1078px;top:377px;width:1px;height:26px;background:#dcdde2"></div>
<div class="a" style="left:1281px;top:377px;width:1px;height:26px;background:#dcdde2"></div>
<div class="a" style="left:1375px;top:377px;width:1px;height:26px;background:#dcdde2"></div>
<svg class="a" style="left:713px;top:383px" width="12" height="12" viewBox="0 0 12 12"><rect x="0.75" y="0.75" width="10.5" height="10.5" fill="#fff" stroke="#3a3a48" stroke-width="1.5"/><path d="M3 6H9M6 3V9" stroke="#2a2a38" stroke-width="1.4"/></svg>
<svg class="a" style="left:756px;top:378px" width="20" height="20" viewBox="0 0 20 20"><rect x="0.5" y="3.5" width="15" height="15" fill="#d4d6dc" stroke="#a8aab4"/><rect x="3" y="6" width="10" height="10" fill="#f0f0f4"/><path d="M1.3 11.4L2.7 10.1L6.4 14.3L15.3 1.4L16.8 2.5L7.2 17.9H5.7Z" fill="#2a2c3a"/></svg>
<div class="t" style="left:805px;top:383px">CO0000073</div>
<div class="t" style="left:939px;top:383px">HOP001</div>
<div class="t" style="left:1083px;top:383px">Hope Works (Pty) Ltd</div>
<div class="t" style="left:1286px;top:383px">CPC</div>
<div class="t" style="left:1380px;top:383px">Cost Per Copy</div>
<div class="a" style="left:710px;top:378px;width:90px;height:25px;border:1px dotted #2a2a38"></div>
<svg class="a" style="left:698px;top:386px" width="6" height="10"><path d="M0 0L5.5 4.8L0 9.6Z" fill="#1a1a28"/></svg>
<div class="a" style="left:692px;top:403px;width:18px;height:26px;background:#f4f4f6"></div>
<div class="a" style="left:710px;top:403px;width:90px;height:26px;background:#ffffff"></div>
<div class="a" style="left:801px;top:403px;width:717px;height:26px;background:#ebebec"></div>
<div class="a" style="left:692px;top:428px;width:826px;height:1px;background:#dcdde2"></div>
<div class="a" style="left:709px;top:403px;width:1px;height:26px;background:#dcdde2"></div>
<div class="a" style="left:800px;top:403px;width:1px;height:26px;background:#dcdde2"></div>
<div class="a" style="left:934px;top:403px;width:1px;height:26px;background:#dcdde2"></div>
<div class="a" style="left:1078px;top:403px;width:1px;height:26px;background:#dcdde2"></div>
<div class="a" style="left:1281px;top:403px;width:1px;height:26px;background:#dcdde2"></div>
<div class="a" style="left:1375px;top:403px;width:1px;height:26px;background:#dcdde2"></div>
<svg class="a" style="left:713px;top:409px" width="12" height="12" viewBox="0 0 12 12"><rect x="0.75" y="0.75" width="10.5" height="10.5" fill="#fff" stroke="#3a3a48" stroke-width="1.5"/><path d="M3 6H9M6 3V9" stroke="#2a2a38" stroke-width="1.4"/></svg>
<svg class="a" style="left:756px;top:404px" width="20" height="20" viewBox="0 0 20 20"><rect x="0.5" y="3.5" width="15" height="15" fill="#d4d6dc" stroke="#a8aab4"/><rect x="3" y="6" width="10" height="10" fill="#f0f0f4"/><path d="M1.3 11.4L2.7 10.1L6.4 14.3L15.3 1.4L16.8 2.5L7.2 17.9H5.7Z" fill="#2a2c3a"/></svg>
<div class="t" style="left:805px;top:409px">CO0000078</div>
<div class="t" style="left:939px;top:409px">HOP001</div>
<div class="t" style="left:1083px;top:409px">Hope Works (Pty) Ltd</div>
<div class="t" style="left:1286px;top:409px">CPC</div>
<div class="t" style="left:1380px;top:409px">Cost Per Copy</div>
<div class="a" style="left:692px;top:429px;width:18px;height:27px;background:#f4f4f6"></div>
<div class="a" style="left:710px;top:429px;width:90px;height:27px;background:#ffffff"></div>
<div class="a" style="left:801px;top:429px;width:717px;height:27px;background:#ebebec"></div>
<div class="a" style="left:692px;top:455px;width:826px;height:1px;background:#dcdde2"></div>
<div class="a" style="left:709px;top:429px;width:1px;height:27px;background:#dcdde2"></div>
<div class="a" style="left:800px;top:429px;width:1px;height:27px;background:#dcdde2"></div>
<div class="a" style="left:934px;top:429px;width:1px;height:27px;background:#dcdde2"></div>
<div class="a" style="left:1078px;top:429px;width:1px;height:27px;background:#dcdde2"></div>
<div class="a" style="left:1281px;top:429px;width:1px;height:27px;background:#dcdde2"></div>
<div class="a" style="left:1375px;top:429px;width:1px;height:27px;background:#dcdde2"></div>
<svg class="a" style="left:713px;top:435px" width="12" height="12" viewBox="0 0 12 12"><rect x="0.75" y="0.75" width="10.5" height="10.5" fill="#fff" stroke="#3a3a48" stroke-width="1.5"/><path d="M3 6H9M6 3V9" stroke="#2a2a38" stroke-width="1.4"/></svg>
<svg class="a" style="left:756px;top:430px" width="20" height="20" viewBox="0 0 20 20"><rect x="0.5" y="3.5" width="15" height="15" fill="#d4d6dc" stroke="#a8aab4"/><rect x="3" y="6" width="10" height="10" fill="#f0f0f4"/><path d="M1.3 11.4L2.7 10.1L6.4 14.3L15.3 1.4L16.8 2.5L7.2 17.9H5.7Z" fill="#2a2c3a"/></svg>
<div class="t" style="left:805px;top:435px">CO0000079</div>
<div class="t" style="left:939px;top:435px">HOP001</div>
<div class="t" style="left:1083px;top:435px">Hope Works (Pty) Ltd</div>
<div class="t" style="left:1286px;top:435px">CPC</div>
<div class="t" style="left:1380px;top:435px">Cost Per Copy</div>
<div class="a" style="left:692px;top:456px;width:18px;height:26px;background:#f4f4f6"></div>
<div class="a" style="left:710px;top:456px;width:90px;height:26px;background:#ffffff"></div>
<div class="a" style="left:801px;top:456px;width:717px;height:26px;background:#ebebec"></div>
<div class="a" style="left:692px;top:481px;width:826px;height:1px;background:#dcdde2"></div>
<div class="a" style="left:709px;top:456px;width:1px;height:26px;background:#dcdde2"></div>
<div class="a" style="left:800px;top:456px;width:1px;height:26px;background:#dcdde2"></div>
<div class="a" style="left:934px;top:456px;width:1px;height:26px;background:#dcdde2"></div>
<div class="a" style="left:1078px;top:456px;width:1px;height:26px;background:#dcdde2"></div>
<div class="a" style="left:1281px;top:456px;width:1px;height:26px;background:#dcdde2"></div>
<div class="a" style="left:1375px;top:456px;width:1px;height:26px;background:#dcdde2"></div>
<svg class="a" style="left:713px;top:462px" width="12" height="12" viewBox="0 0 12 12"><rect x="0.75" y="0.75" width="10.5" height="10.5" fill="#fff" stroke="#3a3a48" stroke-width="1.5"/><path d="M3 6H9M6 3V9" stroke="#2a2a38" stroke-width="1.4"/></svg>
<svg class="a" style="left:756px;top:457px" width="20" height="20" viewBox="0 0 20 20"><rect x="0.5" y="3.5" width="15" height="15" fill="#d4d6dc" stroke="#a8aab4"/><rect x="3" y="6" width="10" height="10" fill="#f0f0f4"/><path d="M1.3 11.4L2.7 10.1L6.4 14.3L15.3 1.4L16.8 2.5L7.2 17.9H5.7Z" fill="#2a2c3a"/></svg>
<div class="t" style="left:805px;top:462px">CO0000082</div>
<div class="t" style="left:939px;top:462px">HOP001</div>
<div class="t" style="left:1083px;top:462px">Hope Works (Pty) Ltd</div>
<div class="t" style="left:1286px;top:462px">CPC</div>
<div class="t" style="left:1380px;top:462px">Cost Per Copy</div>
<div class="a" style="left:692px;top:482px;width:18px;height:26px;background:#f4f4f6"></div>
<div class="a" style="left:710px;top:482px;width:90px;height:26px;background:#ffffff"></div>
<div class="a" style="left:801px;top:482px;width:717px;height:26px;background:#ebebec"></div>
<div class="a" style="left:692px;top:507px;width:826px;height:1px;background:#dcdde2"></div>
<div class="a" style="left:709px;top:482px;width:1px;height:26px;background:#dcdde2"></div>
<div class="a" style="left:800px;top:482px;width:1px;height:26px;background:#dcdde2"></div>
<div class="a" style="left:934px;top:482px;width:1px;height:26px;background:#dcdde2"></div>
<div class="a" style="left:1078px;top:482px;width:1px;height:26px;background:#dcdde2"></div>
<div class="a" style="left:1281px;top:482px;width:1px;height:26px;background:#dcdde2"></div>
<div class="a" style="left:1375px;top:482px;width:1px;height:26px;background:#dcdde2"></div>
<svg class="a" style="left:713px;top:488px" width="12" height="12" viewBox="0 0 12 12"><rect x="0.75" y="0.75" width="10.5" height="10.5" fill="#fff" stroke="#3a3a48" stroke-width="1.5"/><path d="M3 6H9M6 3V9" stroke="#2a2a38" stroke-width="1.4"/></svg>
<svg class="a" style="left:756px;top:483px" width="20" height="20" viewBox="0 0 20 20"><rect x="0.5" y="3.5" width="15" height="15" fill="#d4d6dc" stroke="#a8aab4"/><rect x="3" y="6" width="10" height="10" fill="#f0f0f4"/><path d="M1.3 11.4L2.7 10.1L6.4 14.3L15.3 1.4L16.8 2.5L7.2 17.9H5.7Z" fill="#2a2c3a"/></svg>
<div class="t" style="left:805px;top:488px">CO0000083</div>
<div class="t" style="left:939px;top:488px">HOP001</div>
<div class="t" style="left:1083px;top:488px">Hope Works (Pty) Ltd</div>
<div class="t" style="left:1286px;top:488px">CPC</div>
<div class="t" style="left:1380px;top:488px">Cost Per Copy</div>
<div class="a" style="left:692px;top:508px;width:18px;height:26px;background:#f4f4f6"></div>
<div class="a" style="left:710px;top:508px;width:90px;height:26px;background:#ffffff"></div>
<div class="a" style="left:801px;top:508px;width:717px;height:26px;background:#ebebec"></div>
<div class="a" style="left:692px;top:533px;width:826px;height:1px;background:#dcdde2"></div>
<div class="a" style="left:709px;top:508px;width:1px;height:26px;background:#dcdde2"></div>
<div class="a" style="left:800px;top:508px;width:1px;height:26px;background:#dcdde2"></div>
<div class="a" style="left:934px;top:508px;width:1px;height:26px;background:#dcdde2"></div>
<div class="a" style="left:1078px;top:508px;width:1px;height:26px;background:#dcdde2"></div>
<div class="a" style="left:1281px;top:508px;width:1px;height:26px;background:#dcdde2"></div>
<div class="a" style="left:1375px;top:508px;width:1px;height:26px;background:#dcdde2"></div>
<svg class="a" style="left:713px;top:514px" width="12" height="12" viewBox="0 0 12 12"><rect x="0.75" y="0.75" width="10.5" height="10.5" fill="#fff" stroke="#3a3a48" stroke-width="1.5"/><path d="M3 6H9M6 3V9" stroke="#2a2a38" stroke-width="1.4"/></svg>
<svg class="a" style="left:756px;top:509px" width="20" height="20" viewBox="0 0 20 20"><rect x="0.5" y="3.5" width="15" height="15" fill="#d4d6dc" stroke="#a8aab4"/><rect x="3" y="6" width="10" height="10" fill="#f0f0f4"/><path d="M1.3 11.4L2.7 10.1L6.4 14.3L15.3 1.4L16.8 2.5L7.2 17.9H5.7Z" fill="#2a2c3a"/></svg>
<div class="t" style="left:805px;top:514px">CO0000012</div>
<div class="t" style="left:939px;top:514px">TIA001</div>
<div class="t" style="left:1083px;top:514px">Titan Group</div>
<div class="t" style="left:1286px;top:514px">CPC</div>
<div class="t" style="left:1380px;top:514px">Cost Per Copy</div>
<div class="a" style="left:692px;top:534px;width:18px;height:26px;background:#f4f4f6"></div>
<div class="a" style="left:710px;top:534px;width:90px;height:26px;background:#ffffff"></div>
<div class="a" style="left:801px;top:534px;width:717px;height:26px;background:#ebebec"></div>
<div class="a" style="left:692px;top:559px;width:826px;height:1px;background:#dcdde2"></div>
<div class="a" style="left:709px;top:534px;width:1px;height:26px;background:#dcdde2"></div>
<div class="a" style="left:800px;top:534px;width:1px;height:26px;background:#dcdde2"></div>
<div class="a" style="left:934px;top:534px;width:1px;height:26px;background:#dcdde2"></div>
<div class="a" style="left:1078px;top:534px;width:1px;height:26px;background:#dcdde2"></div>
<div class="a" style="left:1281px;top:534px;width:1px;height:26px;background:#dcdde2"></div>
<div class="a" style="left:1375px;top:534px;width:1px;height:26px;background:#dcdde2"></div>
<svg class="a" style="left:713px;top:540px" width="12" height="12" viewBox="0 0 12 12"><rect x="0.75" y="0.75" width="10.5" height="10.5" fill="#fff" stroke="#3a3a48" stroke-width="1.5"/><path d="M3 6H9M6 3V9" stroke="#2a2a38" stroke-width="1.4"/></svg>
<svg class="a" style="left:756px;top:535px" width="20" height="20" viewBox="0 0 20 20"><rect x="0.5" y="3.5" width="15" height="15" fill="#d4d6dc" stroke="#a8aab4"/><rect x="3" y="6" width="10" height="10" fill="#f0f0f4"/><path d="M1.3 11.4L2.7 10.1L6.4 14.3L15.3 1.4L16.8 2.5L7.2 17.9H5.7Z" fill="#2a2c3a"/></svg>
<div class="t" style="left:805px;top:540px">CO0000018</div>
<div class="t" style="left:939px;top:540px">SAM001</div>
<div class="t" style="left:1083px;top:540px">Samanthas Diner</div>
<div class="t" style="left:1286px;top:540px">CPC</div>
<div class="t" style="left:1380px;top:540px">Cost Per Copy</div>
<div class="a" style="left:692px;top:560px;width:18px;height:27px;background:#f4f4f6"></div>
<div class="a" style="left:710px;top:560px;width:90px;height:27px;background:#ffffff"></div>
<div class="a" style="left:801px;top:560px;width:717px;height:27px;background:#ebebec"></div>
<div class="a" style="left:692px;top:586px;width:826px;height:1px;background:#dcdde2"></div>
<div class="a" style="left:709px;top:560px;width:1px;height:27px;background:#dcdde2"></div>
<div class="a" style="left:800px;top:560px;width:1px;height:27px;background:#dcdde2"></div>
<div class="a" style="left:934px;top:560px;width:1px;height:27px;background:#dcdde2"></div>
<div class="a" style="left:1078px;top:560px;width:1px;height:27px;background:#dcdde2"></div>
<div class="a" style="left:1281px;top:560px;width:1px;height:27px;background:#dcdde2"></div>
<div class="a" style="left:1375px;top:560px;width:1px;height:27px;background:#dcdde2"></div>
<svg class="a" style="left:713px;top:566px" width="12" height="12" viewBox="0 0 12 12"><rect x="0.75" y="0.75" width="10.5" height="10.5" fill="#fff" stroke="#3a3a48" stroke-width="1.5"/><path d="M3 6H9M6 3V9" stroke="#2a2a38" stroke-width="1.4"/></svg>
<svg class="a" style="left:756px;top:561px" width="20" height="20" viewBox="0 0 20 20"><rect x="0.5" y="3.5" width="15" height="15" fill="#d4d6dc" stroke="#a8aab4"/><rect x="3" y="6" width="10" height="10" fill="#f0f0f4"/><path d="M1.3 11.4L2.7 10.1L6.4 14.3L15.3 1.4L16.8 2.5L7.2 17.9H5.7Z" fill="#2a2c3a"/></svg>
<div class="t" style="left:805px;top:566px">CO0000078</div>
<div class="t" style="left:939px;top:566px">PIN0001</div>
<div class="t" style="left:1083px;top:566px">Pink Shoes</div>
<div class="t" style="left:1286px;top:566px">CPC</div>
<div class="t" style="left:1380px;top:566px">Cost Per Copy</div>
<div class="a" style="left:692px;top:587px;width:18px;height:26px;background:#f4f4f6"></div>
<div class="a" style="left:710px;top:587px;width:90px;height:26px;background:#ffffff"></div>
<div class="a" style="left:801px;top:587px;width:717px;height:26px;background:#ebebec"></div>
<div class="a" style="left:692px;top:612px;width:826px;height:1px;background:#dcdde2"></div>
<div class="a" style="left:709px;top:587px;width:1px;height:26px;background:#dcdde2"></div>
<div class="a" style="left:800px;top:587px;width:1px;height:26px;background:#dcdde2"></div>
<div class="a" style="left:934px;top:587px;width:1px;height:26px;background:#dcdde2"></div>
<div class="a" style="left:1078px;top:587px;width:1px;height:26px;background:#dcdde2"></div>
<div class="a" style="left:1281px;top:587px;width:1px;height:26px;background:#dcdde2"></div>
<div class="a" style="left:1375px;top:587px;width:1px;height:26px;background:#dcdde2"></div>
<svg class="a" style="left:713px;top:593px" width="12" height="12" viewBox="0 0 12 12"><rect x="0.75" y="0.75" width="10.5" height="10.5" fill="#fff" stroke="#3a3a48" stroke-width="1.5"/><path d="M3 6H9M6 3V9" stroke="#2a2a38" stroke-width="1.4"/></svg>
<svg class="a" style="left:756px;top:588px" width="20" height="20" viewBox="0 0 20 20"><rect x="0.5" y="3.5" width="15" height="15" fill="#d4d6dc" stroke="#a8aab4"/><rect x="3" y="6" width="10" height="10" fill="#f0f0f4"/><path d="M1.3 11.4L2.7 10.1L6.4 14.3L15.3 1.4L16.8 2.5L7.2 17.9H5.7Z" fill="#2a2c3a"/></svg>
<div class="t" style="left:805px;top:593px">CO0000084</div>
<div class="t" style="left:939px;top:593px">PIN0001</div>
<div class="t" style="left:1083px;top:593px">Pink Shoes</div>
<div class="t" style="left:1286px;top:593px">CPC</div>
<div class="t" style="left:1380px;top:593px">Cost Per Copy</div>
<div class="a" style="left:692px;top:613px;width:18px;height:26px;background:#f4f4f6"></div>
<div class="a" style="left:710px;top:613px;width:90px;height:26px;background:#ffffff"></div>
<div class="a" style="left:801px;top:613px;width:717px;height:26px;background:#ebebec"></div>
<div class="a" style="left:692px;top:638px;width:826px;height:1px;background:#dcdde2"></div>
<div class="a" style="left:709px;top:613px;width:1px;height:26px;background:#dcdde2"></div>
<div class="a" style="left:800px;top:613px;width:1px;height:26px;background:#dcdde2"></div>
<div class="a" style="left:934px;top:613px;width:1px;height:26px;background:#dcdde2"></div>
<div class="a" style="left:1078px;top:613px;width:1px;height:26px;background:#dcdde2"></div>
<div class="a" style="left:1281px;top:613px;width:1px;height:26px;background:#dcdde2"></div>
<div class="a" style="left:1375px;top:613px;width:1px;height:26px;background:#dcdde2"></div>
<svg class="a" style="left:713px;top:619px" width="12" height="12" viewBox="0 0 12 12"><rect x="0.75" y="0.75" width="10.5" height="10.5" fill="#fff" stroke="#3a3a48" stroke-width="1.5"/><path d="M3 6H9M6 3V9" stroke="#2a2a38" stroke-width="1.4"/></svg>
<svg class="a" style="left:756px;top:614px" width="20" height="20" viewBox="0 0 20 20"><rect x="0.5" y="3.5" width="15" height="15" fill="#d4d6dc" stroke="#a8aab4"/><rect x="3" y="6" width="10" height="10" fill="#f0f0f4"/><path d="M1.3 11.4L2.7 10.1L6.4 14.3L15.3 1.4L16.8 2.5L7.2 17.9H5.7Z" fill="#2a2c3a"/></svg>
<div class="t" style="left:805px;top:619px">PC0000001</div>
<div class="t" style="left:939px;top:619px">DAN002</div>
<div class="t" style="left:1083px;top:619px">Dancing Shoes</div>
<div class="t" style="left:1286px;top:619px">PRE</div>
<div class="t" style="left:1380px;top:619px">Prepaid Contract</div>
<div class="a" style="left:692px;top:639px;width:18px;height:26px;background:#f4f4f6"></div>
<div class="a" style="left:710px;top:639px;width:90px;height:26px;background:#ffffff"></div>
<div class="a" style="left:801px;top:639px;width:717px;height:26px;background:#ebebec"></div>
<div class="a" style="left:692px;top:664px;width:826px;height:1px;background:#dcdde2"></div>
<div class="a" style="left:709px;top:639px;width:1px;height:26px;background:#dcdde2"></div>
<div class="a" style="left:800px;top:639px;width:1px;height:26px;background:#dcdde2"></div>
<div class="a" style="left:934px;top:639px;width:1px;height:26px;background:#dcdde2"></div>
<div class="a" style="left:1078px;top:639px;width:1px;height:26px;background:#dcdde2"></div>
<div class="a" style="left:1281px;top:639px;width:1px;height:26px;background:#dcdde2"></div>
<div class="a" style="left:1375px;top:639px;width:1px;height:26px;background:#dcdde2"></div>
<svg class="a" style="left:713px;top:645px" width="12" height="12" viewBox="0 0 12 12"><rect x="0.75" y="0.75" width="10.5" height="10.5" fill="#fff" stroke="#3a3a48" stroke-width="1.5"/><path d="M3 6H9M6 3V9" stroke="#2a2a38" stroke-width="1.4"/></svg>
<svg class="a" style="left:756px;top:640px" width="20" height="20" viewBox="0 0 20 20"><rect x="0.5" y="3.5" width="15" height="15" fill="#d4d6dc" stroke="#a8aab4"/><rect x="3" y="6" width="10" height="10" fill="#f0f0f4"/><path d="M1.3 11.4L2.7 10.1L6.4 14.3L15.3 1.4L16.8 2.5L7.2 17.9H5.7Z" fill="#2a2c3a"/></svg>
<div class="t" style="left:805px;top:645px">CO0000085</div>
<div class="t" style="left:939px;top:645px">BIG0001</div>
<div class="t" style="left:1083px;top:645px">Big Bargains</div>
<div class="t" style="left:1286px;top:645px">CPC</div>
<div class="t" style="left:1380px;top:645px">Cost Per Copy</div>
<div class="a" style="left:692px;top:665px;width:18px;height:26px;background:#f4f4f6"></div>
<div class="a" style="left:710px;top:665px;width:90px;height:26px;background:#ffffff"></div>
<div class="a" style="left:801px;top:665px;width:717px;height:26px;background:#ebebec"></div>
<div class="a" style="left:692px;top:690px;width:826px;height:1px;background:#dcdde2"></div>
<div class="a" style="left:709px;top:665px;width:1px;height:26px;background:#dcdde2"></div>
<div class="a" style="left:800px;top:665px;width:1px;height:26px;background:#dcdde2"></div>
<div class="a" style="left:934px;top:665px;width:1px;height:26px;background:#dcdde2"></div>
<div class="a" style="left:1078px;top:665px;width:1px;height:26px;background:#dcdde2"></div>
<div class="a" style="left:1281px;top:665px;width:1px;height:26px;background:#dcdde2"></div>
<div class="a" style="left:1375px;top:665px;width:1px;height:26px;background:#dcdde2"></div>
<svg class="a" style="left:713px;top:671px" width="12" height="12" viewBox="0 0 12 12"><rect x="0.75" y="0.75" width="10.5" height="10.5" fill="#fff" stroke="#3a3a48" stroke-width="1.5"/><path d="M3 6H9M6 3V9" stroke="#2a2a38" stroke-width="1.4"/></svg>
<svg class="a" style="left:756px;top:666px" width="20" height="20" viewBox="0 0 20 20"><rect x="0.5" y="3.5" width="15" height="15" fill="#d4d6dc" stroke="#a8aab4"/><rect x="3" y="6" width="10" height="10" fill="#f0f0f4"/><path d="M1.3 11.4L2.7 10.1L6.4 14.3L15.3 1.4L16.8 2.5L7.2 17.9H5.7Z" fill="#2a2c3a"/></svg>
<div class="t" style="left:805px;top:671px">CO0000086</div>
<div class="t" style="left:939px;top:671px">BIG0001</div>
<div class="t" style="left:1083px;top:671px">Big Bargains</div>
<div class="t" style="left:1286px;top:671px">CPC</div>
<div class="t" style="left:1380px;top:671px">Cost Per Copy</div>
<div class="a" style="left:692px;top:805px;width:826px;height:1px;background:#d0d2d8"></div>
<div class="a" style="left:692px;top:806px;width:826px;height:36px;background:linear-gradient(90deg,#e8e8ec,#ececf0 40%,#e6e6ea)"></div>
<div class="a" style="left:802px;top:809px;width:131px;height:30px;background:#fff;border:1px solid #d8d9de"></div>
<div class="t" style="left:800px;width:126px;text-align:right;top:818px;transform-origin:100% 0">16 of 16</div>
<div class="a" style="left:1081px;top:809px;width:199px;height:30px;background:#fff;border:1px solid #d8d9de"></div>
<div class="t" style="left:1080px;width:194px;text-align:right;top:818px;transform-origin:100% 0">Totals: 16 of 16</div>
<div class="a" style="left:692px;top:842px;width:826px;height:21px;background:#f3f3f5"></div>
<svg class="a" style="left:698px;top:848px" width="6" height="9"><path d="M5.5 0L0 4.5L5.5 9Z" fill="#7c808c"/></svg>
<div class="a" style="left:712px;top:848px;width:775px;height:10px;border:1px solid #b8bac2;border-radius:5px;background:linear-gradient(#f0f0f2,#d8d9de)"></div>
<svg class="a" style="left:1505px;top:848px" width="6" height="9"><path d="M0.5 0L6 4.5L0.5 9Z" fill="#7c808c"/></svg>
</body></html>
